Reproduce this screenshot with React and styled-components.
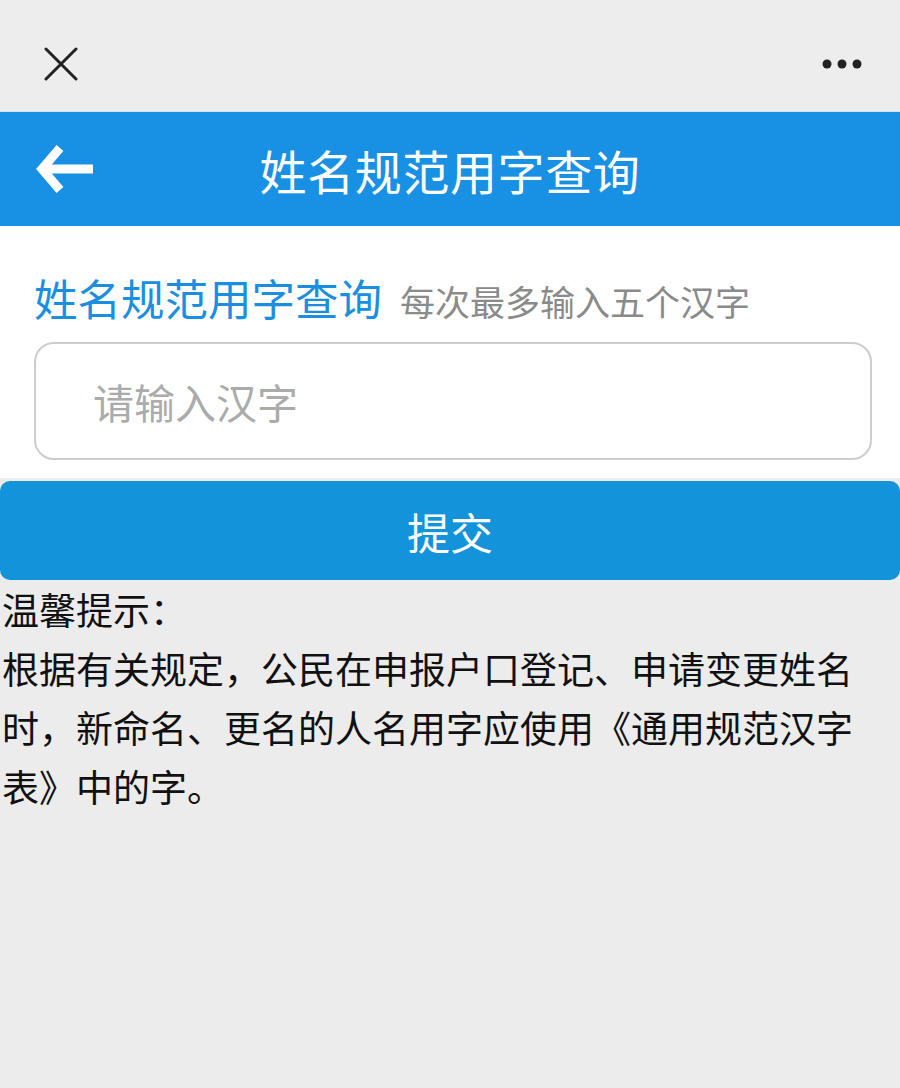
import React from "react";
import styled, { createGlobalStyle } from "styled-components";

const GlobalStyle = createGlobalStyle`
  html, body {
    margin: 0;
    padding: 0;
    background: #ececec;
    font-family: "Noto Sans CJK SC", "Noto Sans", sans-serif;
  }
`;

const Page = styled.div`
  width: 900px;
  min-height: 1088px;
  background: #ececec;
`;

const TopBar = styled.div`
  height: 112px;
  display: flex;
  align-items: center;
  justify-content: space-between;
  padding: 16px 36px 0 44px;
  background: #ededed;
  border-bottom: 1px solid #cfe3f3;
  box-sizing: border-box;
`;

const IconButton = styled.button`
  border: 0;
  background: none;
  padding: 0;
  display: flex;
  cursor: pointer;
`;

const Header = styled.div`
  height: 114px;
  display: grid;
  grid-template-columns: 1fr auto 1fr;
  align-items: center;
  background: #1890e4;
  padding: 0 36px;
`;

const Title = styled.h1`
  margin: 0;
  font-size: 47px;
  font-weight: 400;
  color: #fff;
  letter-spacing: 0.6px;
`;

const FormCard = styled.div`
  background: #fff;
  padding: 48px 28px 18px 34px;
`;

const HeadingRow = styled.div`
  display: flex;
  align-items: baseline;
  gap: 18px;
  margin-bottom: 16px;
`;

const Heading = styled.span`
  font-size: 43.5px;
  color: #1a8ee0;
  line-height: 1.1;
`;

const Hint = styled.span`
  font-size: 35px;
  color: #8a8a8a;
`;

const Input = styled.input`
  display: block;
  box-sizing: border-box;
  width: 838px;
  height: 118px;
  border: 2px solid #cdcdcd;
  border-radius: 20px;
  padding: 0 0 0 57px;
  font-family: inherit;
  font-size: 41px;
  color: #333;
  outline: none;
  &::placeholder {
    color: #ababab;
  }
`;

const Submit = styled.button`
  display: block;
  width: 100%;
  height: 99px;
  margin-top: 3px;
  border: 0;
  border-radius: 10px;
  background: #1393d9;
  color: #fff;
  font-family: inherit;
  font-size: 43px;
  cursor: pointer;
`;

const Tips = styled.div`
  padding: 0 30px 0 2px;
  font-size: 37px;
  line-height: 59px;
  color: #111;
`;

const TipLine = styled.p`
  margin: 0;
`;

function CloseIcon() {
  return (
    <svg width="34" height="34" viewBox="0 0 34 34">
      <path d="M2 2 L32 32 M32 2 L2 32" stroke="#222" strokeWidth="3" strokeLinecap="round" />
    </svg>
  );
}

function MoreIcon() {
  return (
    <svg width="42" height="10" viewBox="0 0 42 10">
      <circle cx="5" cy="5" r="4.5" fill="#222" />
      <circle cx="20" cy="5" r="4.5" fill="#222" />
      <circle cx="35" cy="5" r="4.5" fill="#222" />
    </svg>
  );
}

function BackIcon() {
  return (
    <svg width="58" height="50" viewBox="0 0 58 50">
      <path d="M57 25 H6" stroke="#fff" strokeWidth="9" />
      <path d="M24 4 L6 25 L24 46" stroke="#fff" strokeWidth="9" fill="none" strokeLinejoin="miter" />
    </svg>
  );
}

export default function App() {
  return (
    <Page>
      <GlobalStyle />
      <TopBar>
        <IconButton aria-label="关闭"><CloseIcon /></IconButton>
        <IconButton aria-label="更多"><MoreIcon /></IconButton>
      </TopBar>
      <Header>
        <IconButton aria-label="返回"><BackIcon /></IconButton>
        <Title>姓名规范用字查询</Title>
        <span />
      </Header>
      <FormCard>
        <HeadingRow>
          <Heading>姓名规范用字查询</Heading>
          <Hint>每次最多输入五个汉字</Hint>
        </HeadingRow>
        <Input placeholder="请输入汉字" />
      </FormCard>
      <Submit>提交</Submit>
      <Tips>
        <TipLine>温馨提示：</TipLine>
        <TipLine>
          根据有关规定，公民在申报户口登记、申请变更姓名时，新命名、更名的人名用字应使用《通用规范汉字表》中的字。
        </TipLine>
      </Tips>
    </Page>
  );
}
